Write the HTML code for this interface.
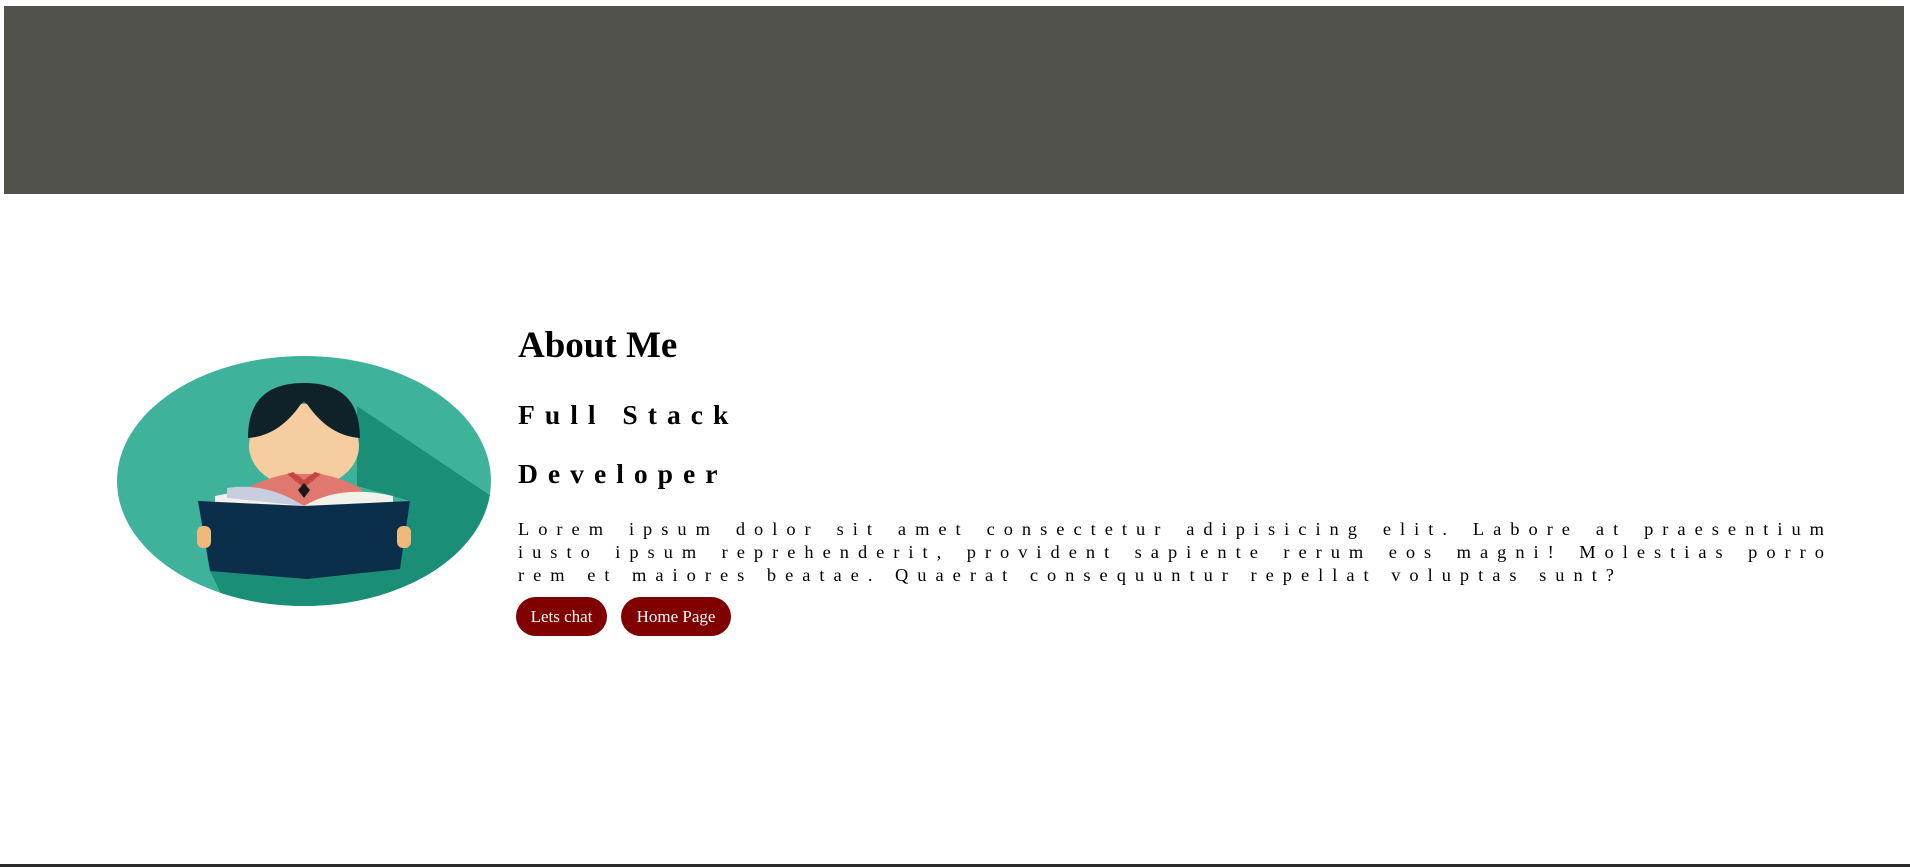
<!DOCTYPE html>
<html><head><style>
body{margin:0;width:1910px;height:867px;background:#fff;position:relative;overflow:hidden;font-family:"Liberation Serif",serif;}
.hdr{position:absolute;left:4px;top:6px;width:1900px;height:188px;background:#52524c;}
.foot{position:absolute;left:0;top:864px;width:1910px;height:3px;background:#2a2a2a;}
h1,h2,p{margin:0;position:absolute;left:518px;}
h1{top:324px;font-size:37px;font-weight:bold;}
h2{font-size:27.6px;font-weight:bold;letter-spacing:10px;}
p{top:518px;width:1315px;font-size:18.4px;letter-spacing:9px;line-height:23px;text-align:justify;}
.btn{position:absolute;top:597px;height:39px;background:#800000;color:#fff;border-radius:20px;font-size:17px;line-height:39px;text-align:center;}
</style></head><body>
<div class="hdr"></div>
<svg style="position:absolute;left:117px;top:356px" width="374" height="250" viewBox="0 0 374 250">
<defs><clipPath id="c"><ellipse cx="187" cy="125" rx="187" ry="125"/></clipPath></defs>
<ellipse cx="187" cy="125" rx="187" ry="125" fill="#3fb29c"/>
<g clip-path="url(#c)">
<polygon points="240,50 374,140 374,250 110,250 93,215 283,213 293,145 240,130" fill="#1b8e77"/>
</g>
<ellipse cx="187" cy="90" rx="55" ry="42" fill="#f6cda0"/>
<path d="M131,82 C131,40 155,27 187,27 C219,27 243,40 243,82 Q212,80 190,48 L187,46 L184,48 Q162,80 131,82Z" fill="#0f2129"/>
<path d="M126,150 L130,132 Q150,122 170,118 L204,118 Q224,122 244,132 L248,150Z" fill="#e07870"/>
<polygon points="170,118 187,132 204,118 198,116 187,124 176,116" fill="#c9463f"/>
<polygon points="187,127 193,134 187,142 181,134" fill="#1a1a1a"/>
<path d="M98,140 Q150,128 187,150 Q224,128 276,140 L276,150 L98,150Z" fill="#f2f2ea"/>
<path d="M110,132 Q150,126 187,150 L110,142Z" fill="#c8cde0"/>
<polygon points="81,145 187,150 293,145 283,213 190,223 93,215" fill="#0b2e4a"/>
<rect x="80" y="170" width="14" height="22" rx="6" fill="#f0b87a"/>
<rect x="280" y="170" width="14" height="22" rx="6" fill="#f0b87a"/>
</svg>
<h1>About Me</h1>
<h2 style="top:399px">Full Stack</h2>
<h2 style="top:458px">Developer</h2>
<p>Lorem ipsum dolor sit amet consectetur adipisicing elit. Labore at praesentium iusto ipsum reprehenderit, provident sapiente rerum eos magni! Molestias porro rem et maiores beatae. Quaerat consequuntur repellat voluptas sunt?</p>
<div class="btn" style="left:516px;width:91px">Lets chat</div>
<div class="btn" style="left:621px;width:110px">Home Page</div>
<div class="foot"></div>
</body></html>
